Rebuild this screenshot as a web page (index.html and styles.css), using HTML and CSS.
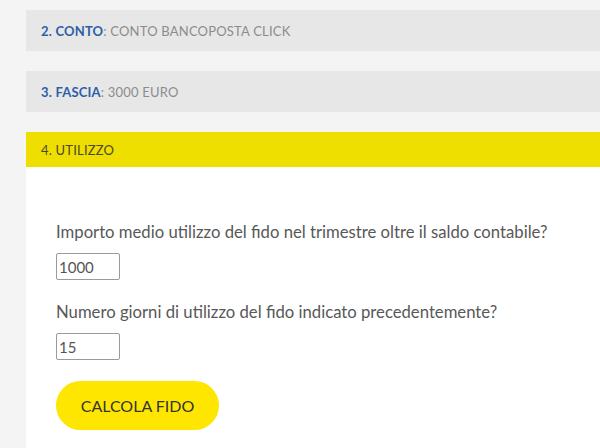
FILE: index.html
```html
<!DOCTYPE html>
<html lang="it">
<head>
  <meta charset="UTF-8">
  <title>Calcola fido</title>
  <link rel="stylesheet" href="styles.css">
</head>
<body>

  <div class="steps">
    <div class="step done">
      <span class="step-label">2. CONTO</span>: CONTO BANCOPOSTA CLICK
    </div>

    <div class="step done">
      <span class="step-label">3. FASCIA</span>: 3000 EURO
    </div>

    <div class="step active">4. UTILIZZO</div>

    <div class="panel">
      <p class="question">Importo medio utilizzo del fido nel trimestre oltre il saldo contabile?</p>
      <input type="text" class="field" value="1000">

      <p class="question">Numero giorni di utilizzo del fido indicato precedentemente?</p>
      <input type="text" class="field" value="15">

      <div>
        <button class="calc">CALCOLA FIDO</button>
      </div>
    </div>
  </div>

</body>
</html>
```

FILE: styles.css
```css
body {
  font-family: 'Lato', sans-serif;
  background-color: #f4f4f4;
  margin: 0;
  padding: 10px 0 0 26px;
  color: #555;
}

.steps {
  display: flex;
  flex-direction: column;
}

.step {
  font-size: 13px;
  letter-spacing: 0.2px;
  padding: 1px 15px 0;
  display: flex;
  align-items: center;
}

.step.done {
  background-color: #e7e7e7;
  color: #8c8c8c;
  height: 40px;
  margin-bottom: 20px;
}

.step-label {
  color: #2f5ea8;
  font-weight: bold;
}

.step.active {
  background-color: #efdf00;
  color: #4a4a2a;
  height: 34px;
}

.panel {
  background-color: white;
  padding: 55px 30px 20px;
  min-height: 200px;
}

.question {
  font-size: 16.7px;
  line-height: 20px;
  margin: 0 0 11px;
  color: #585858;
}

.field {
  display: block;
  width: 58px;
  height: 21px;
  padding: 2px 2px;
  border: 1px solid #9a9a9a;
  border-radius: 2px;
  font-family: 'Lato', sans-serif;
  font-size: 15px;
  color: #555;
  margin-bottom: 22px;
}

.field:last-of-type {
  margin-bottom: 21px;
}

.calc {
  background-color: #ffe600;
  border: none;
  border-radius: 25px;
  width: 163px;
  height: 49px;
  font-family: 'Lato', sans-serif;
  font-size: 16px;
  color: #333;
  cursor: pointer;
}
```
